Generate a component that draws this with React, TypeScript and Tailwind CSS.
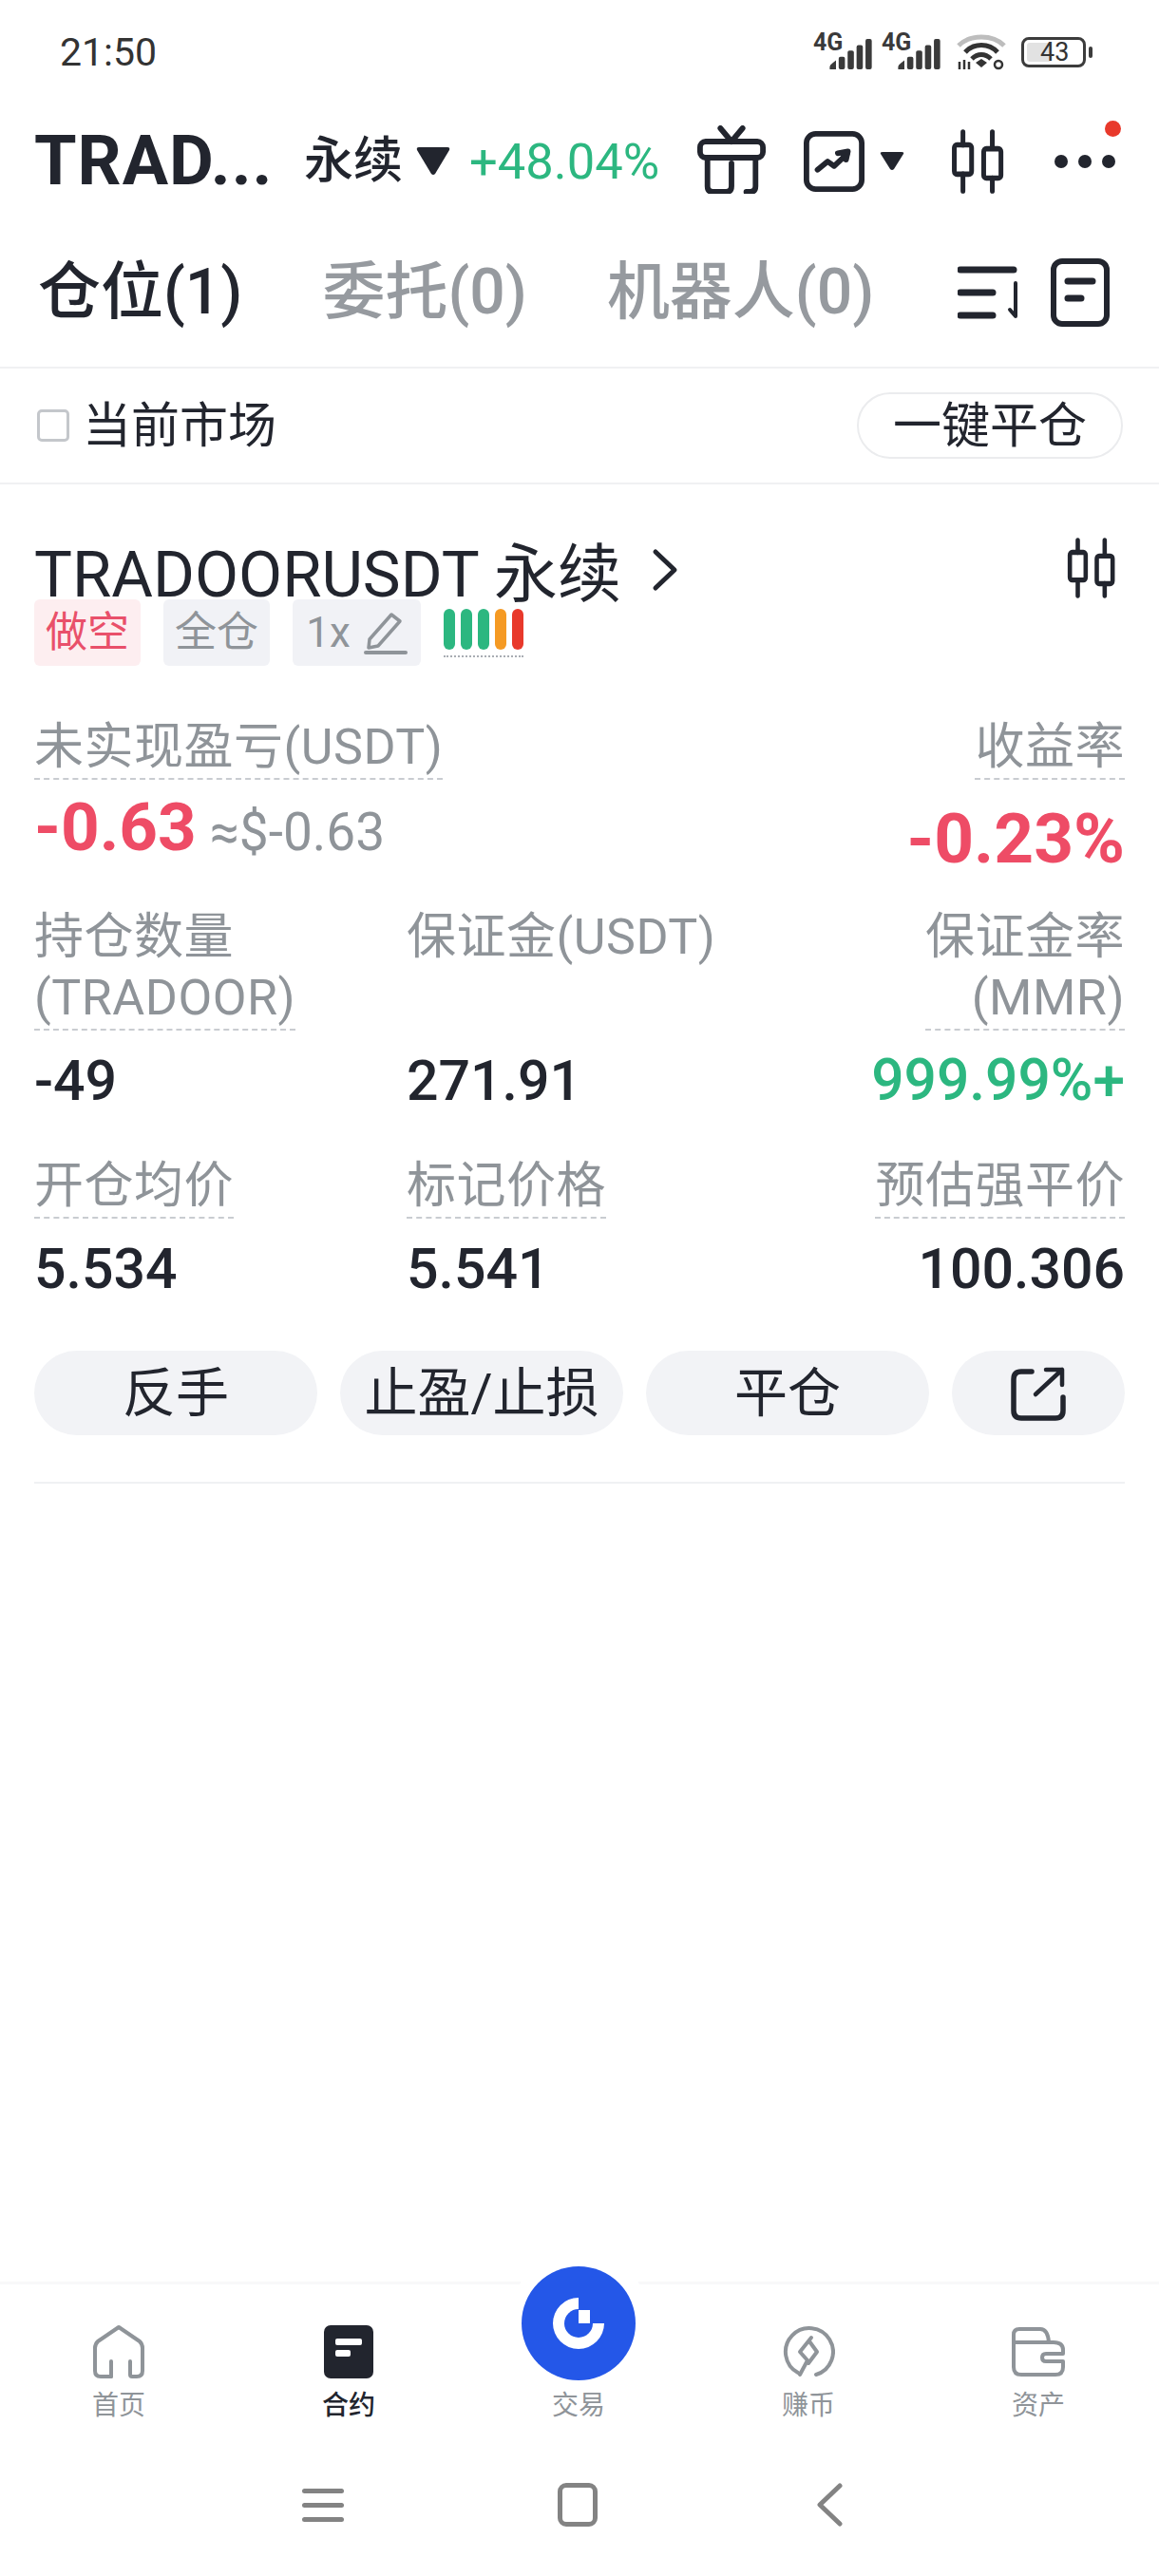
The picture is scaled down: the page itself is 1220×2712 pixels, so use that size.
import React from "react";

const FONT = "font-['Roboto','Noto_Sans_CJK_SC',sans-serif]";

function Candle({ className }: { className: string }) {
  return (
    <svg viewBox="0 0 66 66" preserveAspectRatio="none" fill="none" stroke="#22252e" strokeWidth="5.5" strokeLinecap="round" strokeLinejoin="round" className={className}>
      <path d="M15 3v13M15 46v17M49 3v15M49 50v13" />
      <rect x="5" y="16" width="20" height="30" rx="3" />
      <rect x="39" y="20" width="20" height="30" rx="3" />
    </svg>
  );
}

function Label({ children, right, cls = "" }: { children: React.ReactNode; right?: boolean; cls?: string }) {
  return (
    <div className={`inline-block border-b-2 border-dashed border-[#c9ccd1] text-[52px] leading-[64px] tracking-[0.5px] text-[#8f9499] ${right ? "text-right" : ""} ${cls}`}>
      {children}
    </div>
  );
}

function Cell({ label, value, align, valueCls = "text-[59px] text-[#22252e]" }: { label: React.ReactNode; value: string; align?: "right"; valueCls?: string }) {
  return (
    <div className={`flex flex-col ${align === "right" ? "items-end" : "items-start"}`}>
      <Label right={align === "right"}>{label}</Label>
      <div className={`mt-[20px] leading-[66px] font-medium ${valueCls}`}>{value}</div>
    </div>
  );
}

function Tag({ children, cls }: { children: React.ReactNode; cls: string }) {
  return <div className={`flex h-[70px] items-center justify-center rounded-[6px] text-[44px] ${cls}`}>{children}</div>;
}

function NavItem({ icon, label, active }: { icon: React.ReactNode; label: string; active?: boolean }) {
  return (
    <div className="flex flex-col items-center">
      <div className="flex h-[62px] items-center justify-center">{icon}</div>
      <div className={`mt-[8px] text-[28px] leading-[36px] ${active ? "font-medium text-[#22252e]" : "text-[#8f9499]"}`}>{label}</div>
    </div>
  );
}

function Signal() {
  return (
    <div className="relative h-[36px] w-[66px]">
      <span className="absolute left-0 top-[-2px] text-[25px] leading-[20px] font-bold text-[#3a3a3a]">4G</span>
      <svg viewBox="0 0 48 34" className="absolute left-[16px] top-[4px] h-[32px] w-[48px]" fill="#3a3a3a">
        <path d="M0 34v-3q0-2 3-4l4-3v10z" />
        <rect x="10" y="20" width="7" height="14" rx="2" />
        <rect x="20" y="13" width="7" height="21" rx="2" />
        <rect x="30" y="7" width="7" height="27" rx="2" />
        <rect x="40" y="0" width="7" height="34" rx="2" />
      </svg>
    </div>
  );
}

export default function App() {
  return (
    <div className={`flex h-[2712px] w-[1220px] flex-col bg-white text-[#22252e] ${FONT}`}>
      {/* status bar */}
      <div className="flex h-[110px] items-center justify-between pl-[63px] pr-[70px]">
        <span className="text-[41px] leading-none text-[#333]">21:50</span>
        <div className="flex items-center">
          <Signal />
          <div className="ml-[6px]"><Signal /></div>
          <svg viewBox="0 0 52 38" className="ml-[13px] h-[38px] w-[52px]" fill="none">
            <path d="M2 12C14 0 38 0 50 12" stroke="#bdbdbd" strokeWidth="5" />
            <path d="M9 19C18 9 34 9 43 19" stroke="#333" strokeWidth="5" />
            <path d="M16 26C22 20 30 20 36 26" stroke="#333" strokeWidth="5" />
            <path d="M20 30l6-4 6 4-6 5z" fill="#333" />
            <path d="M3 29v8M8 27v10M13 29v8" stroke="#333" strokeWidth="2.5" />
            <circle cx="44" cy="32" r="4" stroke="#333" strokeWidth="2.5" />
          </svg>
          <div className="ml-[16px] flex items-center">
            <div className="relative flex h-[32px] w-[68px] items-center rounded-[8px] border-[3px] border-[#3c3c3c] p-[3px]">
              <div className="h-full w-[26px] rounded-[3px] bg-[#e2e2e2]" />
              <span className="absolute left-[17px] top-[-1px] text-[27px] leading-[28px] text-[#333]">43</span>
            </div>
            <div className="ml-[3px] h-[12px] w-[4px] rounded-full bg-[#3c3c3c]" />
          </div>
        </div>
      </div>

      {/* header */}
      <div className="relative flex h-[120px] items-center pl-[36px]">
        <span className="w-[268px] text-[72px] leading-none font-bold tracking-[1px]">TRAD...</span>
        <span className="ml-[16px] text-[52px] leading-none font-medium">永续</span>
        <svg viewBox="0 0 36 30" className="ml-[14px] h-[30px] w-[36px]" fill="#22252e"><path d="M1 3q-1-3 2-3h30q3 0 2 3L20 28q-2 2-4 0z" /></svg>
        <span className="ml-[20px] text-[52.5px] leading-none text-[#2cb780]">+48.04%</span>
        <svg viewBox="0 0 74 72" preserveAspectRatio="none" fill="none" stroke="#22252e" strokeWidth="6" strokeLinecap="round" strokeLinejoin="round" className="mb-[4px] ml-[40px] h-[72px] w-[72px]">
          <path d="M25 3l12 14L49 3" />
          <rect x="3" y="17" width="68" height="17" rx="6" />
          <path d="M11 34v30q0 6 6 6h14q6 0 6-6V40M63 34v30q0 6-6 6h-4" />
        </svg>
        <svg viewBox="0 0 66 66" fill="none" stroke="#22252e" strokeWidth="6" strokeLinecap="round" strokeLinejoin="round" className="ml-[40px] h-[66px] w-[64px]">
          <rect x="3" y="3" width="60" height="60" rx="10" />
          <path d="M15 42l11-9 7 5 14-13" />
          <path d="M37 24l11-2-2 9" fill="#22252e" />
        </svg>
        <svg viewBox="0 0 26 20" className="ml-[16px] h-[20px] w-[26px]" fill="#22252e"><path d="M1 2q-1-2 2-2h20q3 0 2 2L15 18q-2 2-4 0z" /></svg>
        <Candle className="ml-[48px] h-[68px] w-[60px]" />
        <div className="ml-[50px] flex gap-[11px]">
          <span className="h-[14px] w-[14px] rounded-full bg-[#22252e]" />
          <span className="h-[14px] w-[14px] rounded-full bg-[#22252e]" />
          <span className="h-[14px] w-[14px] rounded-full bg-[#22252e]" />
        </div>
        <span className="absolute left-[1163px] top-[17px] h-[17px] w-[17px] rounded-full bg-[#e8392b]" />
      </div>

      {/* tabs */}
      <div className="flex h-[158px] items-center border-b-2 border-[#f0f1f3] pl-[40px]">
        <span className="text-[66px] leading-none font-medium">仓位(1)</span>
        <span className="ml-[84px] text-[66px] leading-none font-medium text-[#969a9f]">委托(0)</span>
        <span className="ml-[84px] text-[66px] leading-none font-medium text-[#969a9f]">机器人(0)</span>
        <svg viewBox="0 0 68 60" fill="none" stroke="#22252e" strokeLinecap="round" className="ml-[88px] h-[60px] w-[68px]">
          <path d="M3 6h56M3 30h34M3 54h34" strokeWidth="7" />
          <path d="M61 20v35l-6-7" strokeWidth="4" strokeLinejoin="round" />
        </svg>
        <svg viewBox="0 0 62 72" fill="none" stroke="#22252e" strokeLinecap="round" className="ml-[30px] h-[72px] w-[62px]">
          <rect x="3" y="3" width="56" height="66" rx="9" strokeWidth="6" />
          <path d="M18 24h26" strokeWidth="7" />
          <path d="M18 42h14" strokeWidth="7" />
        </svg>
      </div>

      {/* filter */}
      <div className="flex h-[122px] items-center justify-between border-b-2 border-[#f0f1f3] pl-[39px] pr-[38px]">
        <div className="flex items-center">
          <div className="h-[34px] w-[34px] rounded-[5px] border-[3px] border-[#c4c7cb]" />
          <span className="ml-[14px] text-[51px] leading-none">当前市场</span>
        </div>
        <div className="flex h-[70px] w-[280px] items-center justify-center rounded-full border-2 border-[#ebecee] text-[51px] leading-none">一键平仓</div>
      </div>

      {/* position card */}
      <div className="mx-[36px] flex flex-col border-b-2 border-[#f0f1f3] pb-[49px]">
        <div className="mt-[69px] flex h-[52px] items-start justify-between">
          <div className="flex h-[52px] items-center">
            <span className="text-[67px] leading-[52px]">TRADOORUSDT 永续</span>
            <svg viewBox="0 0 28 46" fill="none" stroke="#22252e" strokeWidth="5" strokeLinecap="round" strokeLinejoin="round" className="ml-[32px] mb-[10px] h-[46px] w-[28px]"><path d="M4 4l20 19L4 42" /></svg>
          </div>
          <Candle className="mr-[7px] mt-[-13px] h-[64px] w-[55px]" />
        </div>
        <div className="flex items-start">
          <Tag cls="w-[112px] bg-[#fdeef0] text-[#e9506a]">做空</Tag>
          <Tag cls="ml-[24px] w-[112px] bg-[#f1f2f6] text-[#8f9499]">全仓</Tag>
          <Tag cls="ml-[24px] w-[135px] bg-[#f1f2f6] text-[#8f9499]">
            1x
            <svg viewBox="0 0 46 46" fill="none" stroke="#8f9499" strokeWidth="3.5" strokeLinecap="round" strokeLinejoin="round" className="ml-[14px] h-[46px] w-[46px]">
              <path d="M6 30L29 4l9 7-23 26-10 2z" />
              <path d="M2 44h42" strokeWidth="4" />
            </svg>
          </Tag>
          <div className="ml-[24px] mt-[10px] flex flex-col">
            <div className="flex gap-[6px]">
              <span className="h-[43px] w-[12px] rounded-full bg-[#2cb780]" />
              <span className="h-[43px] w-[12px] rounded-full bg-[#2cb780]" />
              <span className="h-[43px] w-[12px] rounded-full bg-[#2cb780]" />
              <span className="h-[43px] w-[12px] rounded-full bg-[#f59a23]" />
              <span className="h-[43px] w-[12px] rounded-full bg-[#e8392b]" />
            </div>
            <div className="mt-[6px] border-b-2 border-dotted border-[#a9adb3]" />
          </div>
        </div>

        <div className="mt-[54px] flex items-start justify-between">
          <div className="flex flex-col items-start">
            <Label>未实现盈亏(USDT)</Label>
            <div className="mt-[14px] flex items-baseline">
              <span className="text-[71px] leading-[72px] font-bold text-[#ee4c66]">-0.63</span>
              <span className="ml-[14px] text-[55px] leading-none text-[#8f9499]">≈$-0.63</span>
            </div>
          </div>
          <div className="flex flex-col items-end">
            <Label right>收益率</Label>
            <div className="mt-[26px] text-[73px] leading-[72px] font-bold text-[#ee4c66]">-0.23%</div>
          </div>
        </div>

        <div className="mt-[36px] grid grid-cols-[392px_1fr_auto] items-start">
          <Cell label={<>持仓数量<br />(TRADOOR)</>} value="-49" />
          <div className="flex flex-col items-start">
            <div className="text-[52px] leading-[64px] tracking-[0.5px] text-[#8f9499]">保证金(USDT)</div>
            <div className="mt-[86px] text-[59px] leading-[66px] font-medium">271.91</div>
          </div>
          <Cell align="right" label={<>保证金率<br />(MMR)</>} value="999.99%+" valueCls="text-[60.5px] text-[#2cb780]" />
        </div>

        <div className="mt-[46px] grid grid-cols-[392px_1fr_auto] items-start">
          <Cell label="开仓均价" value="5.534" />
          <Cell label="标记价格" value="5.541" />
          <Cell align="right" label="预估强平价" value="100.306" />
        </div>

        <div className="mt-[53px] flex gap-[24px] text-[56px] leading-none">
          <div className="flex h-[89px] w-[298px] items-center justify-center rounded-full bg-[#f2f3f6]">反手</div>
          <div className="flex h-[89px] w-[298px] items-center justify-center rounded-full bg-[#f2f3f6]">止盈/止损</div>
          <div className="flex h-[89px] w-[298px] items-center justify-center rounded-full bg-[#f2f3f6]">平仓</div>
          <div className="flex h-[89px] flex-1 items-center justify-center rounded-full bg-[#f2f3f6]">
            <svg viewBox="0 0 58 58" fill="none" stroke="#22252e" strokeWidth="5.5" strokeLinecap="round" strokeLinejoin="round" className="h-[58px] w-[58px]">
              <path d="M22 6H11q-8 0-8 8v33q0 8 8 8h36q8 0 8-8V33" />
              <path d="M26 30L54 4M37 4h17v16" strokeWidth="4.5" />
            </svg>
          </div>
        </div>
      </div>

      <div className="flex-1" />

      {/* bottom nav */}
      <div className="relative border-t-[3px] border-[#f8f8f9] pb-[11px]">
        <div className="absolute left-[541px] top-[-41px] h-[138px] w-[138px] rounded-full bg-white" />
        <div className="relative grid grid-cols-[repeat(5,242px)] pl-[4px] pt-[40px]">
          <NavItem
            label="首页"
            icon={
              <svg viewBox="0 0 54 56" fill="none" stroke="#8f9499" strokeWidth="4" strokeLinecap="round" strokeLinejoin="round" className="h-[56px] w-[54px]">
                <path d="M19 54H8q-6 0-6-6V24q0-4 3-7L27 2l22 15q3 3 3 7v24q0 6-6 6h-5q-2 0-2-2V38" />
                <path d="M19 38v16" />
              </svg>
            }
          />
          <NavItem
            active
            label="合约"
            icon={
              <div className="flex h-[56px] w-[52px] flex-col items-start gap-[5px] rounded-[7px] bg-[#22252e] pl-[12px] pt-[14px]">
                <span className="h-[7px] w-[28px] rounded-[2px] bg-white" />
                <span className="h-[7px] w-[16px] rounded-[2px] bg-white" />
              </div>
            }
          />
          <NavItem
            label="交易"
            icon={
              <div className="relative h-[62px] w-[120px]">
                <div className="absolute bottom-[1px] left-0 flex h-[120px] w-[120px] items-center justify-center rounded-full bg-[#2457e8]">
                  <svg viewBox="0 0 60 60" className="h-[60px] w-[60px]" fill="none">
                    <path d="M30 3A27 27 0 1 0 57 30H42V16H30z" fill="#fff" />
                    <circle cx="30" cy="30" r="15" fill="#2457e8" />
                    <rect x="30" y="16" width="12" height="14" fill="#fff" />
                  </svg>
                </div>
              </div>
            }
          />
          <NavItem
            label="赚币"
            icon={
              <svg viewBox="0 0 56 56" fill="none" stroke="#8f9499" strokeWidth="4" strokeLinecap="round" strokeLinejoin="round" className="h-[56px] w-[56px]">
                <path d="M17 50A25 25 0 1 1 36 52" />
                <path d="M31 13L19 28l8 9-8 15M29 17l8 11-9 12" />
              </svg>
            }
          />
          <NavItem
            label="资产"
            icon={
              <svg viewBox="0 0 56 52" fill="none" stroke="#8f9499" strokeWidth="4" strokeLinecap="round" strokeLinejoin="round" className="h-[52px] w-[56px]">
                <path d="M2 16V8q0-6 6-6h22q8 0 9 14" />
                <path d="M2 16h42q10 0 10 8v4H36M36 28q-4 0-4 4t4 4h18v6q0 8-8 8H10q-8 0-8-8V16" />
              </svg>
            }
          />
        </div>
      </div>

      {/* system nav */}
      <div className="flex h-[150px] items-center justify-center pr-[14px]">
        <div className="flex w-[44px] flex-col gap-[10px]">
          <span className="h-[5px] rounded-full bg-[#838383]" />
          <span className="h-[5px] rounded-full bg-[#838383]" />
          <span className="h-[5px] rounded-full bg-[#838383]" />
        </div>
        <div className="ml-[225px] h-[46px] w-[42px] rounded-[9px] border-[5px] border-[#838383]" />
        <svg viewBox="0 0 30 46" fill="none" stroke="#838383" strokeWidth="5" strokeLinecap="round" strokeLinejoin="round" className="ml-[229px] h-[46px] w-[30px]"><path d="M26 3L5 23l21 20" /></svg>
      </div>
    </div>
  );
}
